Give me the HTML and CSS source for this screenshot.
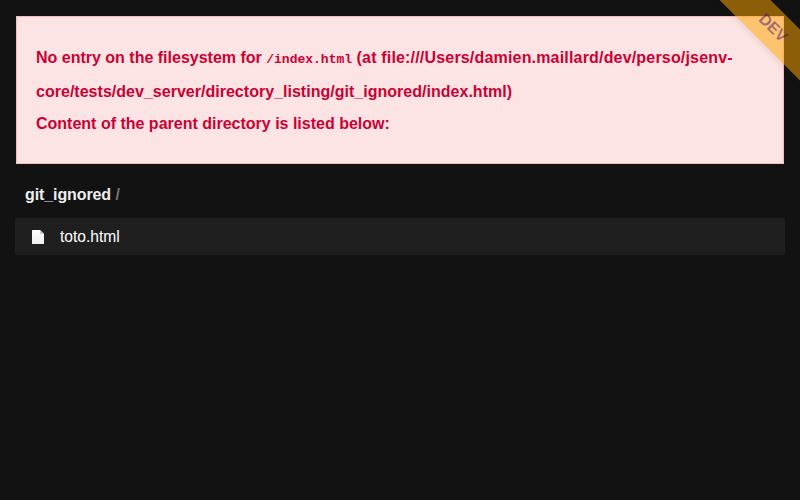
FILE: index.html
```html
<!DOCTYPE html>
<html lang="en">
<head>
<meta charset="utf-8">
<title>Directory explorer</title>
<link rel="stylesheet" href="styles.css">
</head>
<body>
<div class="ribbon"><div class="ribbon-band"><span class="ribbon-text">DEV</span></div></div>
<main class="page">
<div class="error">
<p class="line first">No entry on the filesystem for <code>/index.html</code> <span class="url">(at file:///Users/damien.maillard/dev/perso/jsenv-</span></p>
<p class="line second">core/tests/dev_server/directory_listing/git_ignored/index.html)</p>
<p class="line third">Content of the parent directory is listed below:</p>
</div>
<h1 class="crumb"><span class="dir">git_ignored</span> <span class="slash">/</span></h1>
<ul class="files">
<li class="file"><svg class="icon" viewBox="0 0 12 14"><defs><linearGradient id="paper" x1="0" y1="0" x2="0" y2="1"><stop offset="0" stop-color="#fff"/><stop offset="1" stop-color="#eee"/></linearGradient></defs><path d="M.5 0H8L12 4V13.5Q12 14 11.5 14H.5Q0 14 0 13.5V.5Q0 0 .5 0Z" fill="url(#paper)"/><path d="M8 0V3.5Q8 4 8.5 4H12Z" fill="#ccc"/></svg><span class="name">toto.html</span></li>
</ul>
</main>
</body>
</html>
```

FILE: styles.css
```css
* { box-sizing: border-box; }
body { margin: 0; height: 500px; overflow: hidden; background: #121212; color: #fff; font: 16px/20px "Liberation Sans", Arial, sans-serif; }
.page { padding: 16px 15px 0; }
.error { height: 148px; margin: 0 1px; padding: 24px 19px 0; border: 1px solid #f9b9b9; background: #fce4e4; color: #cc0033; font-weight: bold; }
.line { margin: 0; white-space: nowrap; line-height: 34px; }
.line.second { letter-spacing: .02px; }
.line.third { line-height: 30px; }
code { font: bold 13px/20px "Liberation Mono", monospace; }
.url { letter-spacing: .18px; }
.crumb { height: 54px; margin: 0; padding: 21px 10px 0; font-size: 16px; line-height: 20px; }
.dir { color: #eee; letter-spacing: -.1px; }
.slash { color: #777; }
.files { margin: 0; padding: 0; list-style: none; }
.file { display: flex; align-items: center; height: 37px; padding-left: 17px; border-radius: 2px; background: #1f1f1f; }
.icon { width: 12px; height: 14px; margin-right: 16px; }
.name { font-size: 15.6px; }
.ribbon { position: absolute; top: 0; right: 0; width: 100px; height: 100px; overflow: hidden; pointer-events: none; }
.ribbon-band { position: absolute; top: 9.5px; right: -47.5px; width: 150px; height: 36px; transform: rotate(45deg); background: rgba(255, 165, 0, .52); box-shadow: 0 0 10px rgba(0, 0, 0, .12); display: flex; align-items: center; justify-content: center; }
.ribbon-text { color: rgba(55, 7, 120, .48); font-weight: bold; font-size: 16px; }
```
